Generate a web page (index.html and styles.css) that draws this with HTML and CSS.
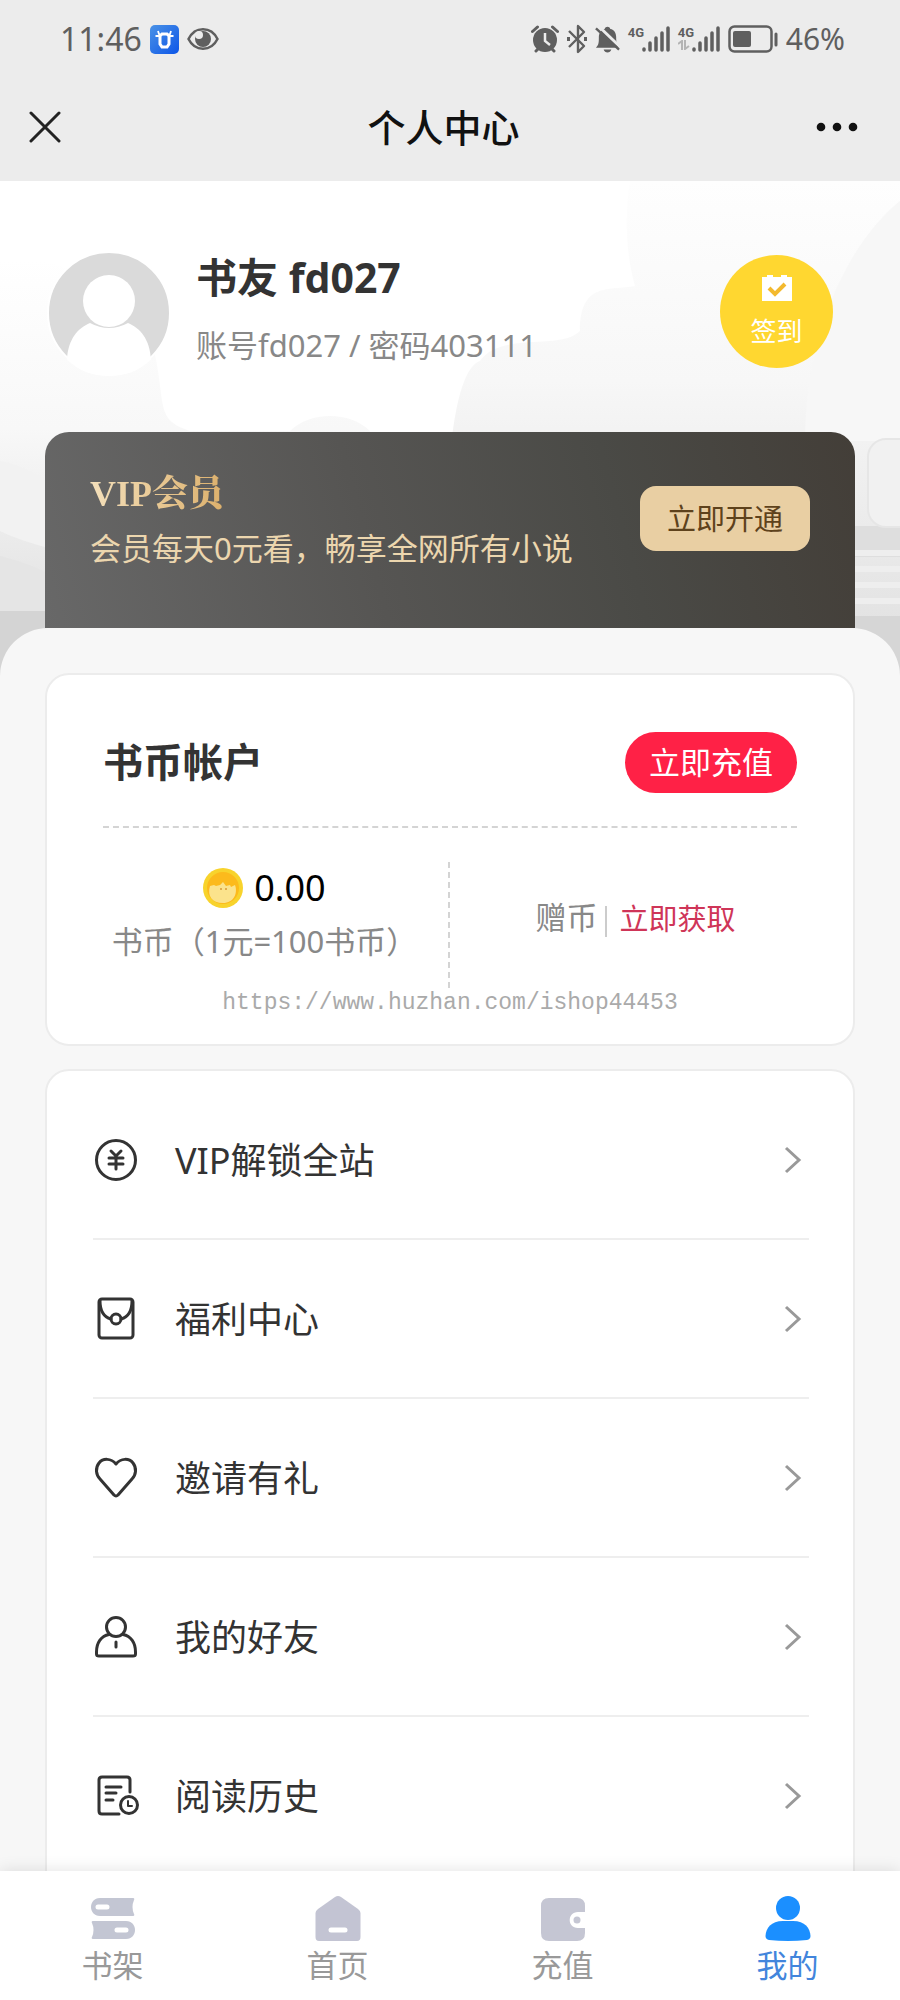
FILE: index.html
```html
<!DOCTYPE html>
<html lang="zh-CN">
<head>
<meta charset="utf-8">
<meta name="viewport" content="width=device-width, initial-scale=1">
<title>个人中心</title>
<link rel="stylesheet" href="styles.css">
</head>
<body>
<div class="app">
  <header class="top">
    <div class="status">
      <div class="status-side">
        <span class="clock">11:46</span>
        <svg width="29" height="29" viewBox="0 0 29 29" aria-hidden="true">
          <defs><linearGradient id="app-blue" x1="0" y1="0" x2="1" y2="1"><stop offset="0" stop-color="#4a92e6"/><stop offset="1" stop-color="#0d56e8"/></linearGradient></defs>
          <rect width="29" height="29" rx="5" fill="url(#app-blue)"/>
          <path d="M12 9h5l2 2v8l-2 3h-5l-2-3v-8z" fill="none" stroke="#fff" stroke-width="3"/>
          <path d="M8 6l1 3l2 1M21 6l-1 3l-2 1M5.500 11H9M20 11h3.500" fill="none" stroke="#fff" stroke-width="1.800"/>
        </svg>
        <svg class="eye" width="32" height="24" viewBox="0 0 32 24" aria-hidden="true">
          <path d="M1.500 12C8 -1 24 -1 30.500 12C24 25 8 25 1.500 12z" fill="none" stroke="#5f5f5f" stroke-width="2.500"/>
          <circle cx="16" cy="12" r="8" fill="#5f5f5f"/><circle cx="12" cy="8" r="4" fill="#ececec"/>
        </svg>
      </div>
      <div class="status-side status-right">
        <svg width="28" height="28" viewBox="0 0 28 28" aria-hidden="true">
          <circle cx="14" cy="15" r="12" fill="#5f5f5f"/>
          <path d="M1.500 6.500L6.500 2M26.500 6.500L21.500 2M5 26l2-2M23 26l-2-2" stroke="#5f5f5f" stroke-width="3" stroke-linecap="round"/>
          <path d="M14 8v8l5 4" fill="none" stroke="#ececec" stroke-width="2.500"/>
        </svg>
        <svg width="20" height="30" viewBox="0 0 20 30" fill="none" stroke="#5f5f5f" stroke-width="2.400" stroke-linejoin="round" aria-hidden="true">
          <path d="M2 7l15 15l-6 6V2l6 6L2 23"/><path d="M0 15h3M17 15h3" stroke-width="4"/>
        </svg>
        <svg width="25" height="28" viewBox="0 0 26 28" aria-hidden="true">
          <path d="M1 23c3-3 3-5 3-11C4 7 7 4 10 3.500c1-3 5-3 6 0C20 4 22 8 22 12c0 6 1 8 3 11zM9 25h8c-1 4-7 4-8 0z" fill="#5f5f5f"/>
          <path d="M3 0l25 24" stroke="#ececec" stroke-width="3"/><path d="M1 3l24 22" stroke="#5f5f5f" stroke-width="2.500"/>
        </svg>
        <span class="signal">
          <span class="net">4G</span>
          <svg width="28" height="26" viewBox="0 0 28 26" stroke="#5f5f5f" stroke-width="3.500" stroke-linecap="round" aria-hidden="true"><path d="M2 23v1M8 17v7M14 12v12M20 7v17M26 2v22"/></svg>
        </span>
        <span class="signal">
          <span class="net">4G<svg width="12" height="10" viewBox="0 0 12 10" fill="none" stroke="#b4b4b4" stroke-width="2" aria-hidden="true"><path d="M0 4l4-3v9M7 0v9l4-3"/></svg></span>
          <svg width="28" height="26" viewBox="0 0 28 26" stroke="#5f5f5f" stroke-width="3.500" stroke-linecap="round" aria-hidden="true"><path d="M2 23v1M8 17v7M14 12v12M20 7v17M26 2v22"/></svg>
        </span>
        <svg width="50" height="28" viewBox="0 0 50 28" aria-hidden="true">
          <rect x="1.500" y="1.500" width="42" height="25" rx="5" fill="none" stroke="#5f5f5f" stroke-width="2.500"/>
          <rect x="5" y="6" width="18" height="16" rx="2" fill="#5f5f5f"/><path d="M48 9v11" stroke="#5f5f5f" stroke-width="3" stroke-linecap="round"/>
        </svg>
        <span class="battery">46%</span>
      </div>
    </div>
    <div class="nav">
      <button class="nav-btn" type="button" aria-label="关闭">
        <svg width="32" height="32" viewBox="0 0 32 32" stroke="#222" stroke-width="3" stroke-linecap="round"><path d="M2 2l28 28M30 2L2 30"/></svg>
      </button>
      <h1 class="nav-title">个人中心</h1>
      <button class="nav-btn nav-more" type="button" aria-label="更多">
        <svg width="42" height="10" viewBox="0 0 42 10" fill="#111"><circle cx="5" cy="5" r="4.300"/><circle cx="21" cy="5" r="4.300"/><circle cx="37" cy="5" r="4.300"/></svg>
      </button>
    </div>
  </header>

  <main class="content">
    <section class="hero">
      <svg class="hero-bg" viewBox="0 0 900 500" preserveAspectRatio="none" aria-hidden="true">
        <defs>
          <linearGradient id="fade" x1="0" y1="0" x2="0" y2="1"><stop offset="0" stop-color="#fff"/><stop offset=".4" stop-color="#f8f8f8"/><stop offset="1" stop-color="#dadada"/></linearGradient>
          <linearGradient id="fade-r" x1="0" y1="0" x2="0" y2="1"><stop offset="0" stop-color="#fefefe"/><stop offset=".4" stop-color="#f7f7f7"/><stop offset="1" stop-color="#dedede"/></linearGradient>
        </defs>
        <path d="M0 80C60 70 150 110 158 190C164 230 160 240 190 250H290C310 230 350 230 370 250V500H0z" fill="url(#fade)"/>
        <path d="M630 0H900V500H450C440 320 450 190 480 180C500 150 560 170 580 150C580 100 610 110 635 105C625 70 625 30 630 0z" fill="url(#fade-r)"/>
        <path d="M900 20C850 60 805 150 805 260H900z" fill="#f7f7f7"/>
        <path d="M0 280Q30 285 60 310V370Q20 360 0 350z" fill="#f2f2f2"/>
        <path d="M0 375Q40 385 60 400V430H0z" fill="#e5e5e5"/><path d="M0 430H60V500H0z" fill="#d4d4d4"/>
        <path d="M850 345H900V376H850z" fill="#dedede"/>
        <path d="M855 435H900V500H855z" fill="#d6d6d6"/>
        <rect x="868" y="258" width="60" height="88" rx="18" fill="#f1f1f1" stroke="#e6e6e6" stroke-width="2"/>
        <path d="M850 372h50M850 388h50M850 404h50M850 420h50" stroke="#eee" stroke-width="6"/>
      </svg>
      <div class="profile">
        <svg class="avatar" viewBox="0 0 126 126" role="img" aria-label="头像">
          <circle cx="64" cy="63" r="61" fill="#dadada"/>
          <path d="M22 110C23 89 33 78 45 73Q64 83 83 73C95 78 105 89 106 110C93 121 81 126 64 126S35 121 22 110z" fill="#fff"/>
          <circle cx="64" cy="51" r="26" fill="#fff"/>
          <circle cx="64" cy="63" r="61" fill="none" stroke="#fff" stroke-width="2"/>
        </svg>
        <div class="who">
          <h2 class="name">书友 fd027</h2>
          <p class="account">账号fd027 / 密码403111</p>
        </div>
        <button class="checkin" type="button">
          <svg width="32" height="28" viewBox="0 0 32 28" aria-hidden="true"><path d="M1 3H6V1h6v2h8V1h6v2h5v24H1z" fill="#fff"/><path d="M8 14l6 6l10-10" fill="none" stroke="#f3b92e" stroke-width="4"/></svg>
          <span>签到</span>
        </button>
      </div>
      <div class="vip">
        <div class="vip-text">
          <h2 class="vip-title">VIP会员</h2>
          <p class="vip-desc">会员每天0元看，畅享全网所有小说</p>
        </div>
        <button class="vip-btn" type="button">立即开通</button>
      </div>
    </section>

    <div class="sheet">
      <section class="card wallet">
        <div class="wallet-head">
          <h2 class="wallet-title">书币帐户</h2>
          <button class="recharge" type="button">立即充值</button>
        </div>
        <div class="wallet-body">
          <div class="coins">
            <div class="amount">
              <svg width="40" height="42" viewBox="0 0 40 42" aria-hidden="true">
                <circle cx="20" cy="21" r="20" fill="#f8d32c"/><circle cx="20" cy="21" r="16" fill="#fcba1c"/>
                <path d="M7 19l4-1l2 1l4-1l3-3l3 4l4-1l1 2l4-2c3 8-1 18-12 18S4 29 7 19z" fill="#fbe38c"/>
                <circle cx="18" cy="22" r="1" fill="#d99a35"/><circle cx="23" cy="22" r="1" fill="#d99a35"/>
              </svg>
              <span>0.00</span>
            </div>
            <p class="muted">书币（1元=100书币）</p>
          </div>
          <div class="bonus"><span class="muted">赠币</span><span class="bar"></span><a class="get" href="#">立即获取</a></div>
        </div>
        <p class="site">https://www.huzhan.com/ishop44453</p>
      </section>

      <ul class="card menu">
        <li><a class="row" href="#">
          <svg class="ico" viewBox="0 0 46 46" aria-hidden="true"><circle cx="23" cy="23" r="19.500"/><path d="M18 14l5 5l5-5M16 21h14M16 27h14M23 19v13"/></svg>
          <span>VIP解锁全站</span><svg class="chev" viewBox="0 0 18 28" aria-hidden="true"><path d="M2 2l13 12L2 26"/></svg></a></li>
        <li><a class="row" href="#">
          <svg class="ico" viewBox="0 0 46 46" aria-hidden="true"><rect x="6" y="3" width="34" height="39" rx="3"/><path d="M7 5C7 15 11 21 18 23M39 5C39 15 35 21 28 23"/><circle cx="23" cy="23" r="5"/></svg>
          <span>福利中心</span><svg class="chev" viewBox="0 0 18 28" aria-hidden="true"><path d="M2 2l13 12L2 26"/></svg></a></li>
        <li><a class="row" href="#">
          <svg class="ico" viewBox="0 0 46 46" aria-hidden="true"><path d="M23 9C18 3 10 3 6 8C2 13 3 20 7 24L21 40Q23 42 25 40L39 24C43 20 44 13 40 8C36 3 28 3 23 9z"/></svg>
          <span>邀请有礼</span><svg class="chev" viewBox="0 0 18 28" aria-hidden="true"><path d="M2 2l13 12L2 26"/></svg></a></li>
        <li><a class="row" href="#">
          <svg class="ico" viewBox="0 0 46 46" aria-hidden="true"><circle cx="23" cy="13" r="9.500"/><path d="M16 20.500C8 22 3.500 29 3.500 38V40Q3.500 42 6 42H40Q42.500 42 42.500 40V38C42.500 29 38 22 30 20.500M23 28v5"/></svg>
          <span>我的好友</span><svg class="chev" viewBox="0 0 18 28" aria-hidden="true"><path d="M2 2l13 12L2 26"/></svg></a></li>
        <li><a class="row" href="#">
          <svg class="ico" viewBox="0 0 46 46" aria-hidden="true"><path d="M37 19V7Q37 4 34 4H9Q6 4 6 7V38Q6 41 9 41H26M13 14H28M13 20H23M13 27H20"/><circle cx="36" cy="32" r="8.500"/><path d="M35 28v5h4" stroke-width="2"/></svg>
          <span>阅读历史</span><svg class="chev" viewBox="0 0 18 28" aria-hidden="true"><path d="M2 2l13 12L2 26"/></svg></a></li>
      </ul>
    </div>
  </main>

  <nav class="tabs">
    <a class="tab" href="#"><svg width="46" height="46" viewBox="0 0 46 46" aria-hidden="true"><path d="M10 3H43Q45 3 44 5Q41 12 44 19Q45 21 43 21H10C-2 21 -2 3 10 3zM3 26H36C48 26 48 44 36 44H3Q1 44 2 42Q5 35 2 28Q1 26 3 26z" fill="#c3c6d3"/><path d="M8 12H17M27 35H36" stroke="#fff" stroke-width="5" stroke-linecap="round"/></svg><span>书架</span></a>
    <a class="tab" href="#"><svg width="46" height="46" viewBox="0 0 46 46" aria-hidden="true"><path d="M20 2Q23 0 26 2L43 14Q45.500 16 45.500 18V42Q45.500 46 42 46H4Q.5 46 .5 42V18Q.5 16 3 14z" fill="#c3c4d3"/><path d="M16 35H30" stroke="#fff" stroke-width="5" stroke-linecap="round"/></svg><span>首页</span></a>
    <a class="tab" href="#"><svg width="46" height="46" viewBox="0 0 46 46" aria-hidden="true"><path d="M9 3H37Q45 3 45 11V17H38C27 17 27 33 38 33H45V38Q45 46 37 46H9Q1 46 1 38V11Q1 3 9 3z" fill="#c5c6d3"/><circle cx="37" cy="25" r="3.500" fill="#c5c6d3"/></svg><span>充值</span></a>
    <a class="tab tab-on" href="#" aria-current="page"><svg width="46" height="46" viewBox="0 0 46 46" aria-hidden="true"><circle cx="23" cy="13" r="12" fill="#1b8fff"/><path d="M18 26H28C40 26 45 33 45.500 41Q45.500 44 42 45Q23 47 4 45Q.5 44 .5 41C1 33 6 26 18 26z" fill="#1b8fff"/></svg><span>我的</span></a>
  </nav>
</div>
</body>
</html>
```

FILE: styles.css
```css
* {
  box-sizing: border-box;
  margin: 0;
  padding: 0;
}

body {
  font-family: "Noto Sans", "Noto Sans CJK SC", sans-serif;
  color: #333;
  background: #f7f7f7;
}

a {
  color: inherit;
  text-decoration: none;
}

button {
  border: 0;
  font: inherit;
  cursor: pointer;
}

svg {
  display: block;
  flex: none;
}

.app {
  display: flex;
  flex-direction: column;
  height: 100vh;
}

/* top bars */
.top {
  flex: none;
  background: #ececec;
}

.status {
  display: flex;
  justify-content: space-between;
  align-items: center;
  height: 78px;
  padding: 0 55px 0 60px;
  color: #5f5f5f;
}

.status-side {
  display: flex;
  align-items: center;
  gap: 8px;
}

.clock,
.battery {
  font-size: 30px;
  line-height: 40px;
}

.clock {
  font-size: 32px;
}

.signal {
  display: flex;
  align-items: flex-start;
}

.net {
  width: 14px;
  height: 26px;
  font-family: "Roboto", sans-serif;
  font-size: 13px;
  font-weight: 700;
  line-height: 14px;
}

.nav {
  display: flex;
  align-items: center;
  justify-content: space-between;
  height: 103px;
  padding: 0 42px 5px 29px;
}

.nav-btn {
  display: flex;
  width: 42px;
  background: none;
}

.nav-title {
  color: #111;
  font-size: 38px;
  font-weight: 500;
  line-height: 56px;
}

/* scrolling area */
.content {
  flex: 1;
  min-height: 0;
  overflow-y: auto;
  scrollbar-width: none;
}

.hero {
  position: relative;
  padding: 69px 45px 0;
  background: #fff;
}

.hero-bg {
  position: absolute;
  top: 0;
  left: 0;
  width: 100%;
  height: 500px;
}

.profile {
  position: relative;
  display: flex;
  align-items: center;
  height: 126px;
  padding-right: 22px;
}

.avatar {
  width: 126px;
  height: 126px;
}

.who {
  flex: 1;
  padding: 0 0 12px 25px;
}

.name {
  font-size: 41px;
  line-height: 60px;
}

.account {
  padding-top: 16px;
  color: #888;
  font-size: 31px;
  line-height: 44px;
}

.checkin {
  display: flex;
  flex-direction: column;
  align-items: center;
  justify-content: center;
  gap: 11px;
  width: 113px;
  height: 113px;
  margin-bottom: 4px;
  border-radius: 50%;
  background: #ffd730;
  color: #fff;
  font-size: 26px;
  line-height: 36px;
}

.vip {
  position: relative;
  display: flex;
  justify-content: space-between;
  align-items: flex-start;
  height: 196px;
  margin-top: 56px;
  padding: 38px 45px 0;
  border-radius: 24px 24px 0 0;
  background: linear-gradient(75deg, #686868 0%, #565553 40%, #4a4a46 70%, #433e38 100%);
}

.vip-title {
  width: fit-content;
  background: linear-gradient(90deg, #f4e0bb, #dcb06c);
  background-clip: text;
  color: transparent;
  font-family: "Liberation Serif", "Noto Serif CJK SC", "Noto Sans CJK SC", serif;
  font-size: 36px;
  font-weight: 900;
  line-height: 48px;
}

.vip-desc {
  padding-top: 8px;
  color: #ecd6ae;
  font-size: 31px;
  line-height: 44px;
}

.vip-btn {
  height: 65px;
  margin-top: 16px;
  padding: 0 27px 3px;
  border-radius: 16px;
  background: #e9cfa3;
  color: #5e421c;
  font-size: 29px;
}

.sheet {
  position: relative;
  padding: 45px 45px 0;
  border-radius: 48px 48px 0 0;
  background: #f7f7f7;
}

.card {
  border: 2px solid #ececec;
  border-radius: 24px;
  background: #fff;
}

/* wallet */
.wallet {
  padding: 57px 56px 0;
  height: 373px;
}

.wallet-head {
  display: flex;
  align-items: center;
  justify-content: space-between;
  padding-bottom: 33px;
  border-bottom: 2px dashed #d4d4d4;
}

.wallet-title {
  padding-bottom: 3px;
  font-size: 40px;
  line-height: 57px;
}

.recharge {
  height: 61px;
  padding: 0 24px 4px;
  border-radius: 31px;
  background: #ff2146;
  color: #fff;
  font-size: 31px;
}

.wallet-body {
  display: grid;
  grid-template-columns: 1fr 1fr;
  height: 126px;
  margin-top: 34px;
}

.coins {
  padding-right: 22px;
  border-right: 2px dashed #d4d4d4;
  text-align: center;
}

.amount {
  display: flex;
  align-items: center;
  justify-content: center;
  gap: 11px;
  height: 52px;
  color: #000;
  font-size: 36px;
  line-height: 48px;
}

.muted {
  color: #888;
  font-size: 31px;
  line-height: 54px;
  white-space: nowrap;
}

.bonus {
  display: flex;
  align-items: center;
  justify-content: center;
  gap: 8px;
  height: 110px;
  padding-left: 24px;
}

.bar {
  width: 2px;
  height: 31px;
  margin-top: 8px;
  background: #ccc;
}

.get {
  padding-left: 4px;
  color: #cf3558;
  font-size: 29px;
}

.site {
  color: #aaa;
  font-family: "Liberation Mono", monospace;
  font-size: 23px;
  line-height: 30px;
  text-align: center;
}

/* menu */
.menu {
  margin-top: 23px;
  padding: 10px 44px 48px 46px;
  list-style: none;
}

.menu li + li {
  border-top: 2px solid #eee;
}

.row {
  display: flex;
  align-items: center;
  height: 157px;
  color: #333;
  font-size: 36px;
}

.row span {
  flex: 1;
  padding: 0 0 3px 36px;
}

.ico {
  width: 46px;
  height: 46px;
  fill: none;
  stroke: #333;
  stroke-width: 3;
  stroke-linecap: round;
  stroke-linejoin: round;
}

.chev {
  width: 18px;
  height: 28px;
  margin-right: 7px;
  fill: none;
  stroke: #999;
  stroke-width: 3;
}

/* bottom tabs */
.tabs {
  position: relative;
  display: grid;
  grid-template-columns: repeat(4, 1fr);
  flex: none;
  height: 129px;
  background: #fff;
  box-shadow: 0 0 16px rgba(0, 0, 0, .12);
}

.tab {
  display: flex;
  flex-direction: column;
  align-items: center;
  gap: 2px;
  padding-top: 24px;
  color: #999;
  font-size: 31px;
  line-height: 44px;
}

.tab-on {
  color: #4285dc;
}
```
